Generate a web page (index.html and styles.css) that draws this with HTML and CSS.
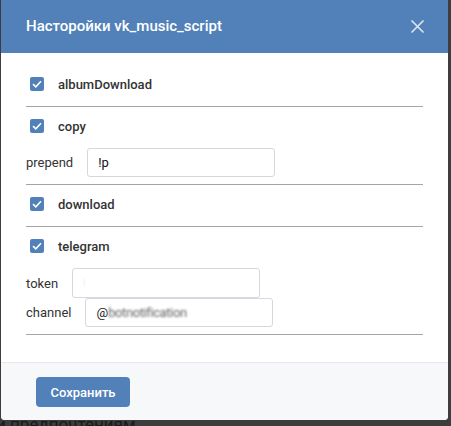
FILE: index.html
```html
<!DOCTYPE html>
<html lang="ru">
<head>
<meta charset="utf-8">
<title>Настройки</title>
<link rel="stylesheet" href="styles.css">
</head>
<body>
<div class="modal">
  <div class="modal-header">
    <span class="modal-title">Насторойки vk_music_script</span>
    <svg class="close" width="13" height="13" viewBox="0 0 13 13"><path d="M1 1L12 12M12 1L1 12" stroke="#dbe4f0" stroke-width="1.7" stroke-linecap="round"/></svg>
  </div>
  <div class="modal-body">
    <div class="section">
      <label class="check"><span class="box"><svg width="10" height="8" viewBox="0 0 10 8"><path d="M1 4.2L3.8 6.8L9 1.2" fill="none" stroke="#fff" stroke-width="1.6"/></svg></span><span class="check-label">albumDownload</span></label>
    </div>
    <div class="section has-field">
      <label class="check"><span class="box"><svg width="10" height="8" viewBox="0 0 10 8"><path d="M1 4.2L3.8 6.8L9 1.2" fill="none" stroke="#fff" stroke-width="1.6"/></svg></span><span class="check-label">copy</span></label>
      <div class="field"><span class="field-label">prepend</span><div class="input">!p</div></div>
    </div>
    <div class="section">
      <label class="check"><span class="box"><svg width="10" height="8" viewBox="0 0 10 8"><path d="M1 4.2L3.8 6.8L9 1.2" fill="none" stroke="#fff" stroke-width="1.6"/></svg></span><span class="check-label">download</span></label>
    </div>
    <div class="section has-field">
      <label class="check"><span class="box"><svg width="10" height="8" viewBox="0 0 10 8"><path d="M1 4.2L3.8 6.8L9 1.2" fill="none" stroke="#fff" stroke-width="1.6"/></svg></span><span class="check-label">telegram</span></label>
      <div class="field"><span class="field-label">token</span><div class="input input-tall"><span class="hidden-val">|</span></div></div>
      <div class="field field-tight"><span class="field-label">channel</span><div class="input"><span class="at">@</span><span class="blur-val">botnotification</span></div></div>
    </div>
  </div>
  <div class="modal-footer">
    <button class="btn">Сохранить</button>
  </div>
</div>
<div class="behind">и предпочтениям</div>
</body>
</html>
```
FILE: styles.css
```css
html, body {
  margin: 0;
  padding: 0;
}
body {
  background: #3d3d3d;
  font-family: Roboto, "Open Sans", sans-serif;
  overflow: hidden;
  height: 426px;
}
.modal {
  position: relative;
  z-index: 1;
  margin-left: 1px;
  width: 447px;
  background: #fff;
  border-radius: 0 0 4px 4px;
  overflow: hidden;
}
.modal-header {
  height: 53px;
  background: #5181b8;
  display: flex;
  align-items: center;
  justify-content: space-between;
  padding: 0 24px 0 25px;
  box-sizing: border-box;
}
.modal-title {
  color: #fff;
  font-size: 15px;
  font-weight: 500;
  margin-top: -2px;
}
.close {
  display: block;
  margin-top: -1px;
}
.modal-body {
  padding: 12px 25px 27px 25px;
}
.section {
  border-bottom: 1px solid #a5a5a5;
  padding: 9px 0 12px;
}
.section.has-field {
  padding-bottom: 7px;
}
.check {
  display: flex;
  align-items: center;
  height: 20px;
  padding-left: 4px;
}
.box {
  width: 14px;
  height: 14px;
  border-radius: 2px;
  background: #5181b8;
  display: flex;
  align-items: center;
  justify-content: center;
}
.check-label {
  margin-left: 14px;
  font-size: 13px;
  font-weight: 500;
  color: #333;
}
.field {
  display: flex;
  align-items: center;
  margin-top: 12px;
}
.field-tight {
  margin-top: 0;
}
.field-label {
  font-size: 13px;
  color: #333;
  margin-right: 14px;
}
.input {
  width: 188px;
  height: 29px;
  box-sizing: border-box;
  border: 1px solid #d3d9de;
  border-radius: 3px;
  padding: 0 10px;
  display: flex;
  align-items: center;
  font-size: 13px;
  color: #111;
}
.input-tall {
  height: 30px;
}
.hidden-val {
  color: #eee;
  font-size: 9px;
}
.at {
  color: #222;
}
.blur-val {
  color: #666;
  filter: blur(0.8px);
  letter-spacing: -0.4px;
}
.modal-footer {
  background: #f7f8fa;
  border-top: 1px solid #e7e8ec;
  height: 58px;
  padding: 14px 0 0 35px;
  box-sizing: border-box;
}
.btn {
  width: 94px;
  height: 30px;
  border: 0;
  border-radius: 4px;
  background: #5181b8;
  color: #fff;
  font-family: Roboto, sans-serif;
  font-size: 13px;
  font-weight: 500;
  padding: 0;
}
.behind {
  font-size: 17px;
  color: #1a1a1a;
  margin-left: -4px;
  margin-top: -6px;
  line-height: 20px;
}
```
